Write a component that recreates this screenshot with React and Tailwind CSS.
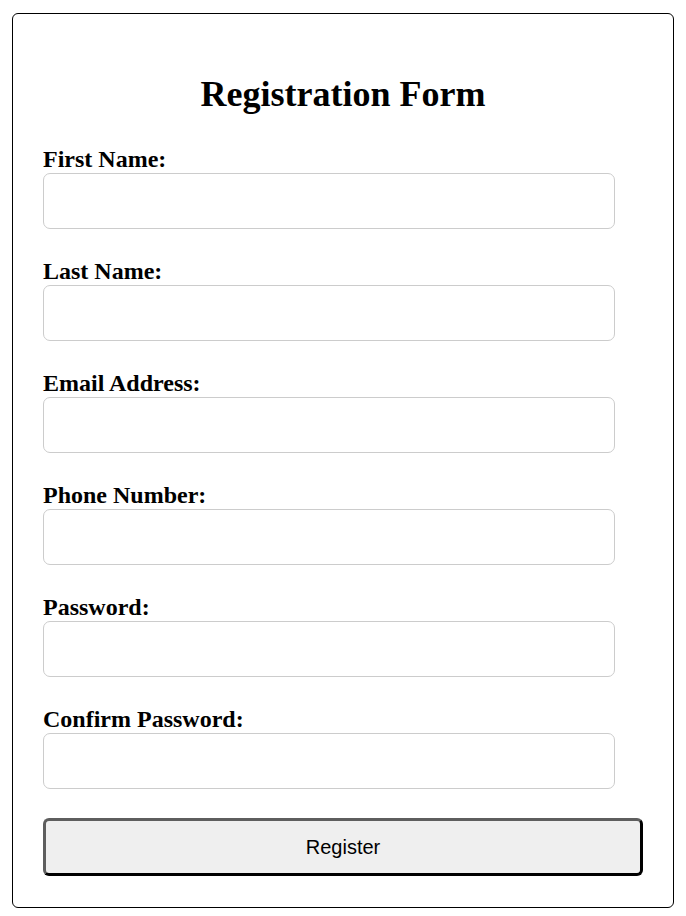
import React, { useState } from "react";

const fields = [
  { name: "firstName", label: "First Name:", type: "text" },
  { name: "lastName", label: "Last Name:", type: "text" },
  { name: "email", label: "Email Address:", type: "email" },
  { name: "phone", label: "Phone Number:", type: "tel" },
  { name: "password", label: "Password:", type: "password" },
  { name: "confirm", label: "Confirm Password:", type: "password" },
];

const App = () => {
  const [form, setForm] = useState({});

  const handleChange = (e) => {
    setForm({ ...form, [e.target.name]: e.target.value });
  };

  return (
    <div className="font-['Liberation_Serif',serif] text-black">
      <div className="ml-[12px] mt-[13px] w-[662px] h-[895px] border border-black rounded-[6px] px-[30px] pt-[59px]">
        <h1 className="text-[36px] leading-[42px] font-bold text-center">Registration Form</h1>
        <form onSubmit={(e) => e.preventDefault()} className="mt-[30px] flex flex-col gap-[28px]">
          {fields.map((f) => (
            <div key={f.name}>
              <label htmlFor={f.name} className="block text-[24px] leading-[28px] font-bold">
                {f.label}
              </label>
              <input
                id={f.name}
                name={f.name}
                type={f.type}
                value={form[f.name] || ""}
                onChange={handleChange}
                className="block w-[572px] h-[56px] border border-[#cccccc] rounded-[7px] px-3 bg-white outline-none"
              />
            </div>
          ))}
          <button
            type="submit"
            className="mt-[1px] w-[600px] h-[58px] bg-[#efefef] rounded-[6px] border-[3px] border-t-[#5e5e5e] border-l-[#5e5e5e] border-b-black border-r-black font-['Liberation_Sans',Arial,sans-serif] text-[20px]"
          >
            Register
          </button>
        </form>
      </div>
    </div>
  );
};

export default App;
